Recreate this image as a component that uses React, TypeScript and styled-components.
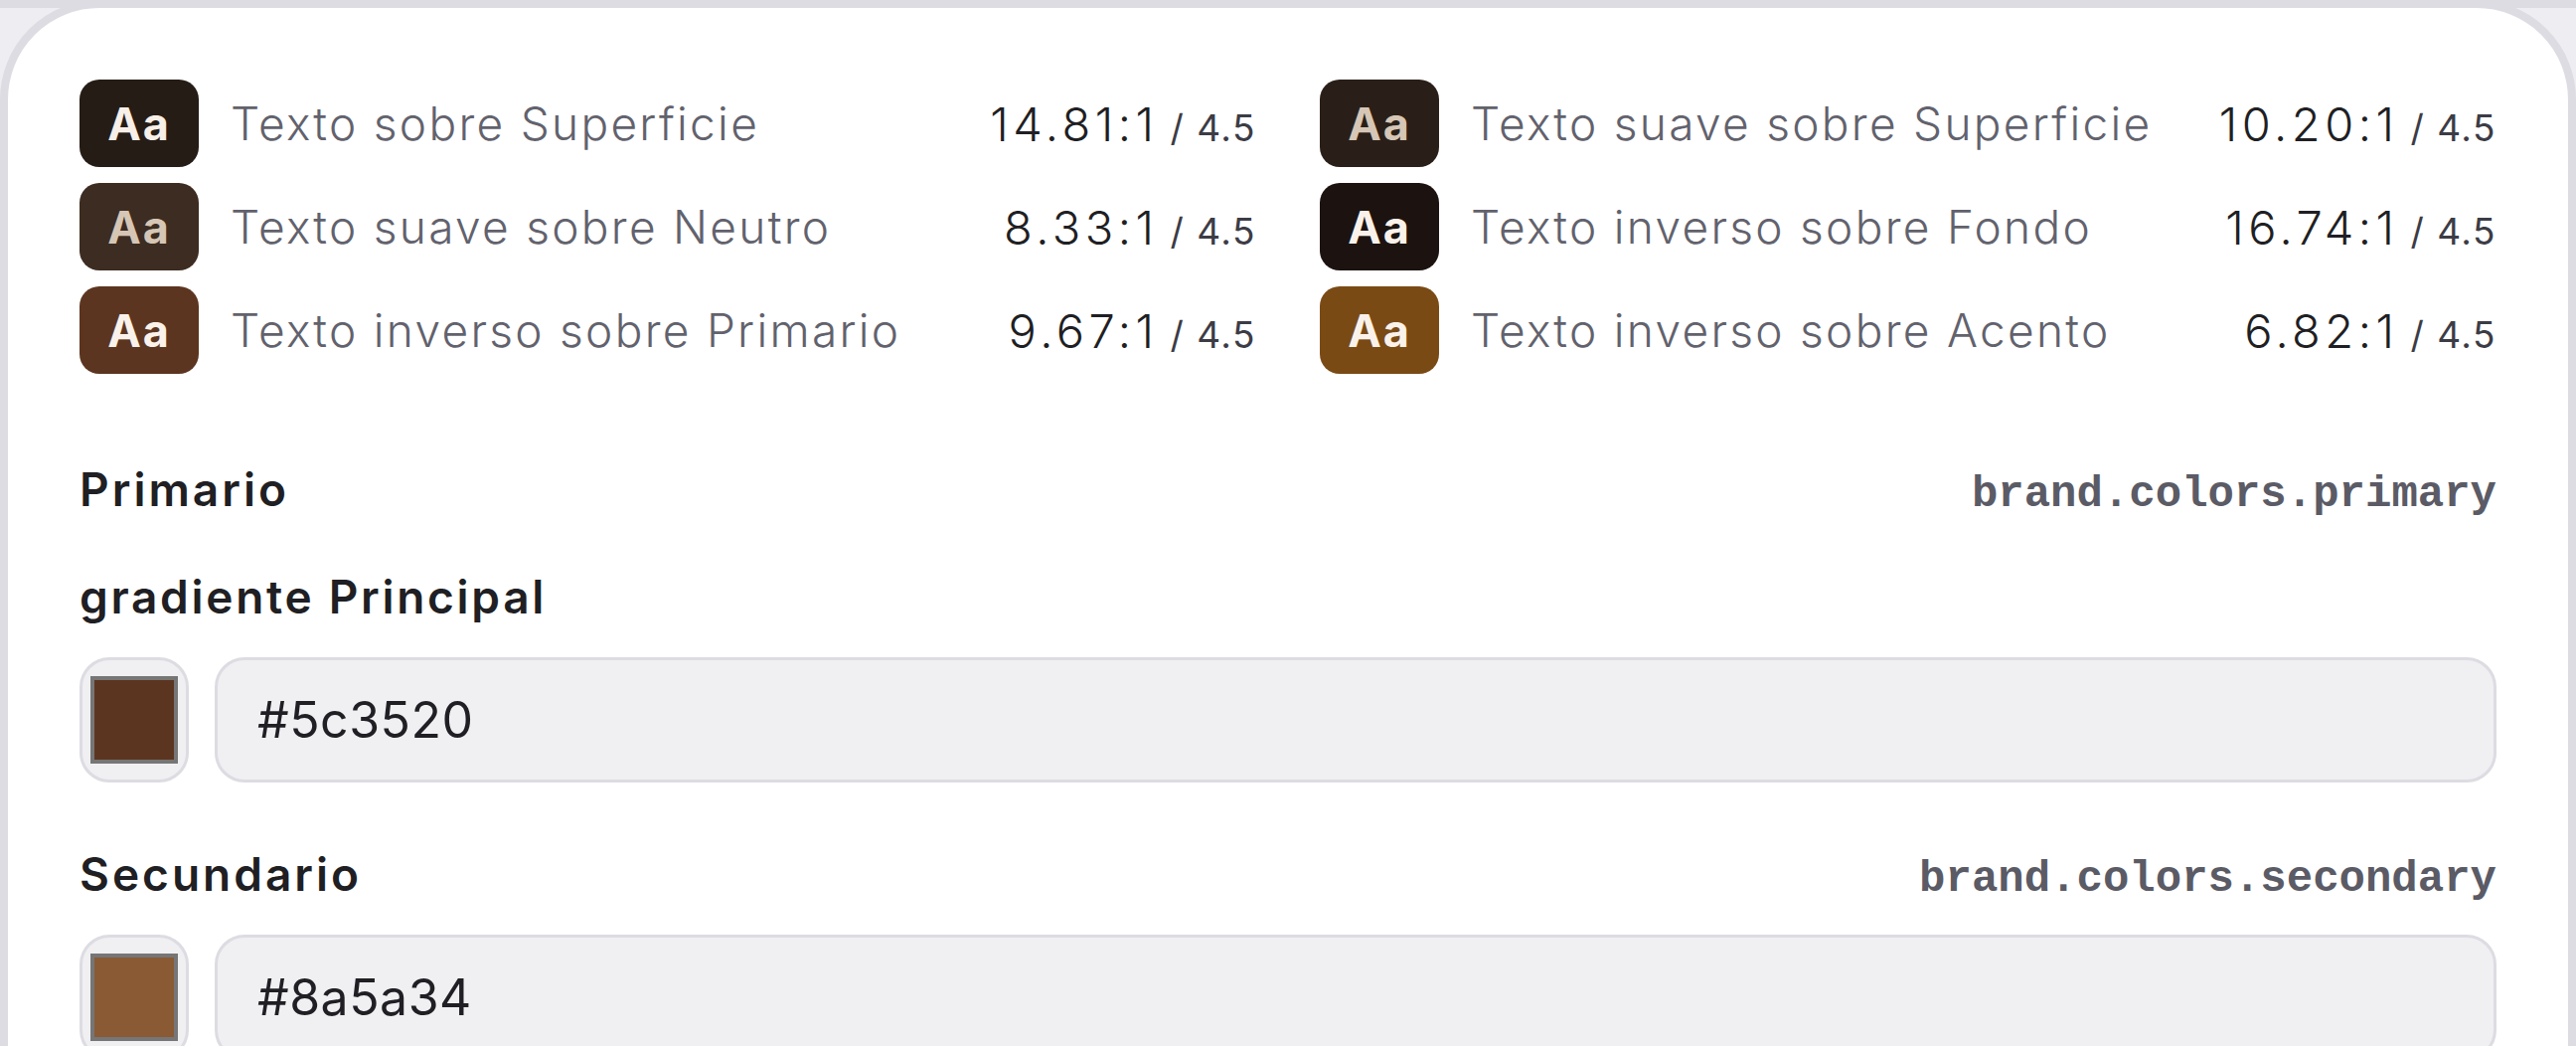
import styled, { createGlobalStyle } from "styled-components";

const GlobalStyle = createGlobalStyle`
    html, body {
        margin: 0;
        padding: 0;
    }
    body {
        background: linear-gradient(#dcdce2 0 8px, #eeeef2 8px);
        font-family: "Inter", "Noto Sans", sans-serif;
        color: #1f1f24;
    }
`;

const Card = styled.div`
    background: #ffffff;
    border: 8px solid #dcdce2;
    border-radius: 100px;
    padding: 72px 72px 120px;
    min-height: 1200px;
    box-sizing: border-box;
`;

const ContrastGrid = styled.div`
    display: grid;
    grid-template-columns: 1fr 1fr;
    column-gap: 64px;
    row-gap: 16px;
`;

const ContrastRow = styled.div`
    display: flex;
    align-items: center;
    gap: 32px;
`;

const Sample = styled.div<{ bg: string; fg: string }>`
    flex: 0 0 120px;
    height: 88px;
    border-radius: 20px;
    background: ${props => props.bg};
    color: ${props => props.fg};
    display: flex;
    align-items: center;
    justify-content: center;
    font-size: 45px;
    font-weight: 700;
    letter-spacing: 2px;
`;

const PairLabel = styled.div`
    flex: 1;
    font-size: 46px;
    font-weight: 300;
    letter-spacing: 2.3px;
    color: #62626d;
    white-space: nowrap;
`;

const Ratio = styled.div`
    font-size: 47px;
    font-weight: 300;
    letter-spacing: 4.5px;
    color: #1f1f24;
    white-space: nowrap;
`;

const Minimum = styled.span`
    font-size: 37px;
    font-weight: 400;
    letter-spacing: 1.5px;
    color: #3c3c46;
    margin-left: 12px;
`;

const Section = styled.section<{ first?: boolean }>`
    margin-top: ${props => props.first ? "88px" : "64px"};
`;

const SectionHead = styled.div`
    display: flex;
    align-items: center;
    justify-content: space-between;
    height: 55px;
`;

const SectionTitle = styled.h3`
    margin: 0;
    font-size: 46px;
    font-weight: 600;
    letter-spacing: 3px;
    color: #1f1f24;
`;

const TokenKey = styled.code`
    font-family: "Liberation Mono", "DejaVu Sans Mono", monospace;
    font-size: 44px;
    font-weight: 700;
    color: #5b5b66;
    padding-top: 10px;
`;

const FieldLabel = styled.div`
    margin-top: 53px;
    height: 55px;
    display: flex;
    align-items: center;
    font-size: 46px;
    font-weight: 600;
    letter-spacing: 2.7px;
    color: #1f1f24;
`;

const FieldRow = styled.div`
    display: flex;
    gap: 26px;
    margin-top: 34px;
`;

const SwatchBox = styled.div`
    flex: 0 0 auto;
    width: 110px;
    height: 126px;
    box-sizing: border-box;
    border: 3px solid #dcdce2;
    border-radius: 30px;
    background: #f0f0f3;
    display: flex;
    align-items: center;
    justify-content: center;
`;

const Swatch = styled.div<{ color: string }>`
    width: 88px;
    height: 88px;
    box-sizing: border-box;
    border: 4px solid #767676;
    background: ${props => props.color};
`;

const HexInput = styled.input`
    flex: 1;
    height: 126px;
    box-sizing: border-box;
    border: 3px solid #dcdce2;
    border-radius: 30px;
    background: #f0f0f3;
    padding: 0 40px;
    font-family: "Inter", "Noto Sans", sans-serif;
    font-size: 50px;
    font-weight: 400;
    letter-spacing: 0.5px;
    color: #1f1f24;
    outline: none;
`;

const pairs = [
    { label: "Texto sobre Superficie", ratio: "14.81:1", bg: "#261c16", fg: "#f7efe8" },
    { label: "Texto suave sobre Superficie", ratio: "10.20:1", bg: "#2a1f18", fg: "#d6c6b5" },
    { label: "Texto suave sobre Neutro", ratio: "8.33:1", bg: "#3d2c22", fg: "#d6c6b5" },
    { label: "Texto inverso sobre Fondo", ratio: "16.74:1", bg: "#1c1311", fg: "#faf2ea" },
    { label: "Texto inverso sobre Primario", ratio: "9.67:1", bg: "#5c3520", fg: "#faf2ea" },
    { label: "Texto inverso sobre Acento", ratio: "6.82:1", bg: "#7a4a15", fg: "#faf2ea" },
];

function ColorField({ value }: { value: string }) {
    return (
        <FieldRow>
            <SwatchBox>
                <Swatch color={value} />
            </SwatchBox>
            <HexInput type="text" defaultValue={value} />
        </FieldRow>
    );
}

export default function App() {
    return (
        <>
            <GlobalStyle />
            <Card>
                <ContrastGrid>
                    {pairs.map(p => (
                        <ContrastRow key={p.label}>
                            <Sample bg={p.bg} fg={p.fg}>Aa</Sample>
                            <PairLabel>{p.label}</PairLabel>
                            <Ratio>
                                {p.ratio}
                                <Minimum>/ 4.5</Minimum>
                            </Ratio>
                        </ContrastRow>
                    ))}
                </ContrastGrid>

                <Section first>
                    <SectionHead>
                        <SectionTitle>Primario</SectionTitle>
                        <TokenKey>brand.colors.primary</TokenKey>
                    </SectionHead>
                    <FieldLabel>gradiente Principal</FieldLabel>
                    <ColorField value="#5c3520" />
                </Section>

                <Section>
                    <SectionHead>
                        <SectionTitle>Secundario</SectionTitle>
                        <TokenKey>brand.colors.secondary</TokenKey>
                    </SectionHead>
                    <ColorField value="#8a5a34" />
                </Section>
            </Card>
        </>
    );
}
